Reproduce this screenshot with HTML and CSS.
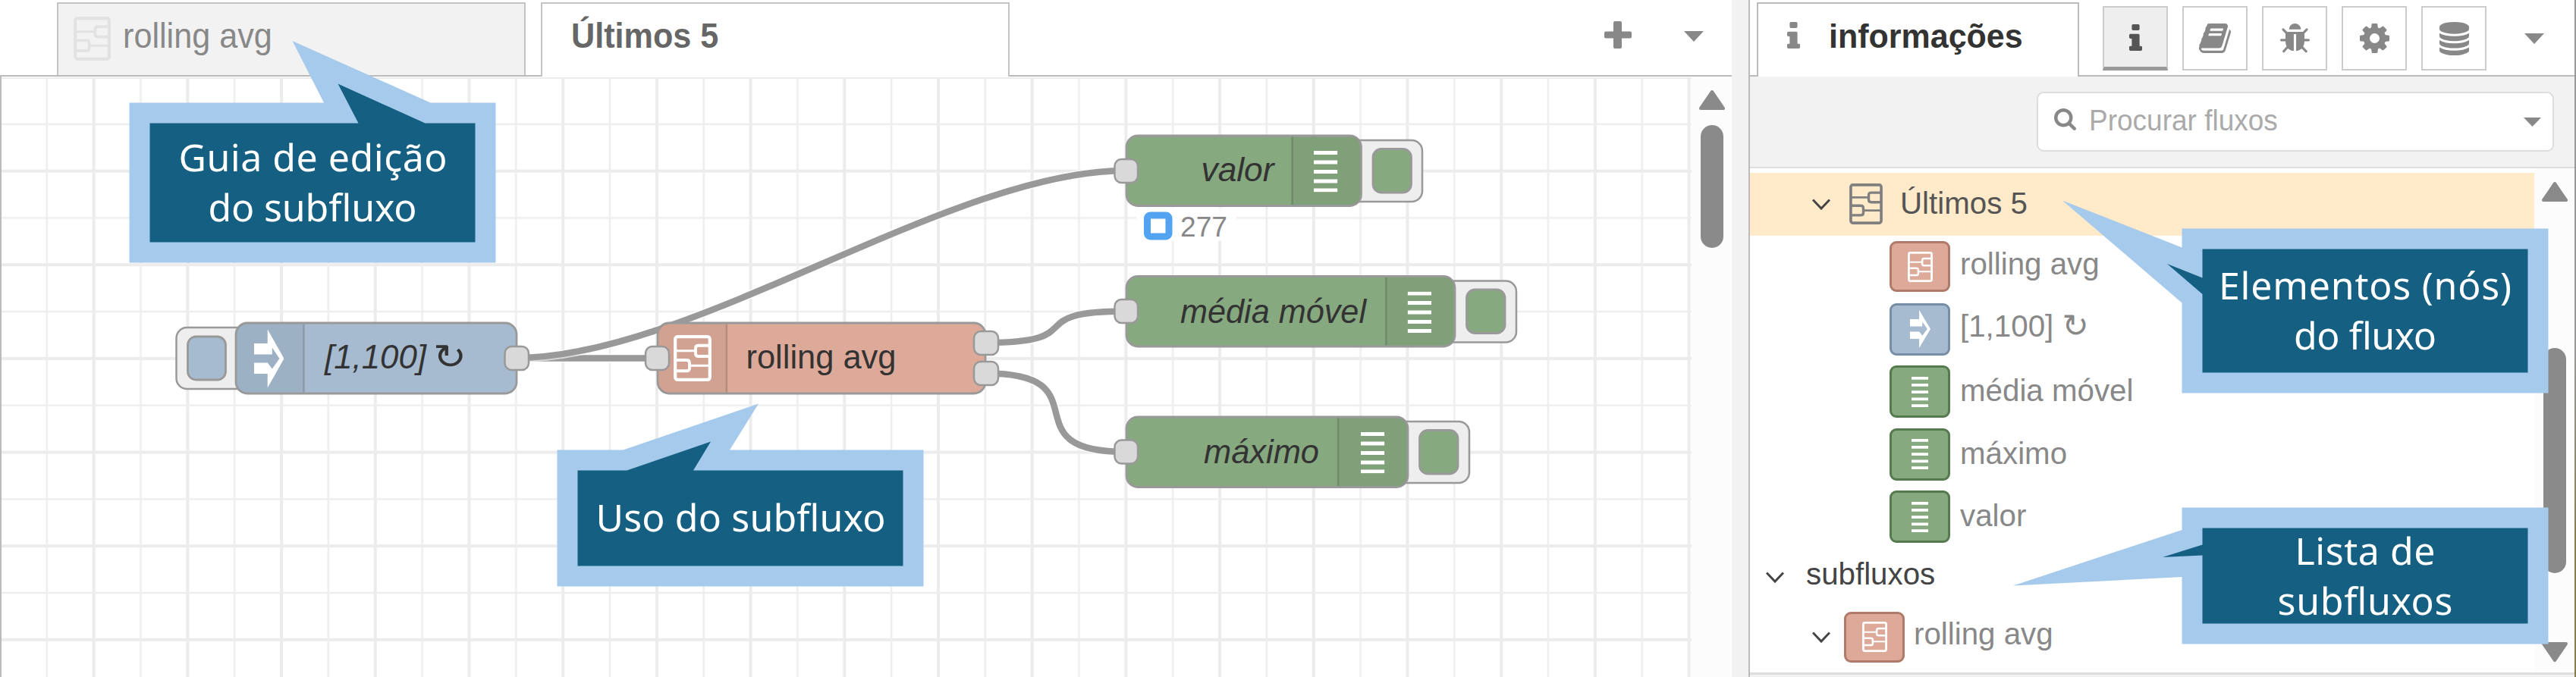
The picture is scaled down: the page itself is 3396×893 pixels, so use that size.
FILE: index.html
```html
<!DOCTYPE html>
<html lang="pt">
<head>
<meta charset="utf-8">
<title>Fluxos</title>
<link rel="stylesheet" href="styles.css">
</head>
<body>
<svg class="defs" width="0" height="0">
  <defs>
    <symbol id="subflow" viewBox="0 0 50 60" preserveAspectRatio="none">
      <g fill="none" stroke="currentColor">
        <rect x="2.2" y="2.2" width="45.6" height="55.6" rx="3" stroke-width="4.2"/>
        <path d="M3 20.5H29M21 39.500H47" stroke-width="3"/>
        <path d="M47 13.500H33Q29 13.500 29 17V24Q29 27.500 33 27.500H47M3 32.500H17Q21 32.500 21 36V43Q21 46.500 17 46.500H3" stroke-width="3.800"/>
      </g>
    </symbol>
    <symbol id="inject" viewBox="0 0 39 77" preserveAspectRatio="none">
      <path fill="currentColor" fill-rule="evenodd" d="M0 18.500H17.500V0L39 38.500L17.500 77V58.500H0V44H17.500L23.500 52L33 38.500L23.500 24V33H0Z"/>
    </symbol>
    <symbol id="debug" viewBox="0 0 32 54" preserveAspectRatio="none">
      <path stroke="currentColor" stroke-width="5" d="M0 2.500H32M0 14.800H32M0 27.200H32M0 39.600H32M0 51.500H32"/>
    </symbol>
    <symbol id="chev" viewBox="0 0 24 15" preserveAspectRatio="none">
      <path fill="none" stroke="currentColor" stroke-width="3" d="M1 1.500L12 13L23 1.500"/>
    </symbol>
    <symbol id="caret" viewBox="0 0 26 14" preserveAspectRatio="none"><path fill="currentColor" d="M0 0H26L13 14Z"/></symbol>
    <symbol id="scroll-arrow" viewBox="0 0 34 27" preserveAspectRatio="none">
      <path fill="currentColor" stroke="currentColor" stroke-width="4" stroke-linejoin="round" d="M17 3L32 25H2Z"/>
    </symbol>
    <symbol id="info" viewBox="576 128 640 1408" preserveAspectRatio="none"><path fill="currentColor" d="M1216 1344v128q0 26-19 45t-45 19h-512q-26 0-45-19t-19-45v-128q0-26 19-45t45-19h64v-384h-64q-26 0-45-19t-19-45v-128q0-26 19-45t45-19h384q26 0 45 19t19 45v576h64q26 0 45 19t19 45zm-128-1152v192q0 26-19 45t-45 19h-256q-26 0-45-19t-19-45v-192q0-26 19-45t45-19h256q26 0 45 19t19 45z"/></symbol>
    <symbol id="book" viewBox="64 128 1664 1536" preserveAspectRatio="none"><path fill="currentColor" d="M1703 478q40 57 18 129l-275 906q-19 64-76.500 107.500t-122.500 43.500h-923q-77 0-148.500-53.500t-99.500-131.500q-24-67-2-127 0-4 3-27t4-37q1-8-3-21.500t-3-19.500q2-11 8-21t16.500-23.500 16.500-23.500q23-38 45-91.500t30-91.500q3-10 .5-30t-.5-28q3-11 17-28t17-23q21-36 42-92t25-90q1-9-2.500-32t.5-28q4-13 22-30.500t22-22.500q19-26 42.500-84.500t27.500-96.500q1-8-3-25.500t-2-26.500q2-8 9-18t18-23 17-21q8-12 16.500-30.500t15-35 16-36 19.500-32 26.500-23.500 36-11.500 47.500 5.500l-1 3q38-9 51-9h761q74 0 114 56t18 130l-274 906q-36 119-71.500 153.500t-128.500 34.500h-869q-27 0-38 15-11 16-1 43 24 70 144 70h923q29 0 56-15.500t35-41.500l300-987q7-22 5-57 38 15 59 43zm-1064 2q-4 13 2 22.500t20 9.500h608q13 0 25.500-9.500t16.500-22.500l21-64q4-13-2-22.500t-20-9.500h-608q-13 0-25.500 9.500t-16.500 22.500zm-83 256q-4 13 2 22.500t20 9.500h608q13 0 25.500-9.500t16.500-22.500l21-64q4-13-2-22.500t-20-9.500h-608q-13 0-25.500 9.500t-16.500 22.500z"/></symbol>
    <symbol id="bug" viewBox="96 64 1600 1594" preserveAspectRatio="none"><path fill="currentColor" d="M1696 960q0 26-19 45t-45 19h-224q0 171-67 290l208 209q19 19 19 45t-19 45q-18 19-45 19t-45-19l-198-197q-5 5-15 13t-42 28.500-65 36.500-82 29-97 13v-896h-128v896q-51 0-101.500-13.500t-87-33-66-39-43.500-32.500l-15-14-183 207q-20 21-48 21-24 0-43-16-19-18-20.500-44.500t15.500-46.500l202-227q-58-114-58-274h-224q-26 0-45-19t-19-45 19-45 45-19h224v-294l-173-173q-19-19-19-45t19-45 45-19 45 19l173 173h844l173-173q19-19 45-19t45 19 19 45-19 45l-173 173v294h224q26 0 45 19t19 45zm-480-576h-640q0-133 93.500-226.500t226.500-93.500 226.500 93.500 93.500 226.500z"/></symbol>
    <symbol id="cog" viewBox="128 128 1536 1536" preserveAspectRatio="none"><path fill="currentColor" d="M1152 896q0-106-75-181t-181-75-181 75-75 181 75 181 181 75 181-75 75-181zm512-109v222q0 12-8 23t-20 13l-185 28q-19 54-39 91 35 50 107 138 10 12 10 25t-9 23q-27 37-99 108t-94 71q-12 0-26-9l-138-108q-44 23-91 38-16 136-29 186-7 28-36 28h-222q-14 0-24.500-8.500t-11.500-21.500l-28-184q-49-16-90-37l-141 107q-10 9-25 9-14 0-25-11-126-114-165-168-7-10-7-23 0-12 8-23 15-21 51-66.500t54-70.500q-27-50-41-99l-183-27q-13-2-21-12.500t-8-23.500v-222q0-12 8-23t19-13l186-28q14-46 39-92-40-57-107-138-10-12-10-24 0-10 9-23 26-36 98.500-107.500t94.500-71.500q13 0 26 10l138 107q44-23 91-38 16-136 29-186 7-28 36-28h222q14 0 24.500 8.500t11.500 21.500l28 184q49 16 90 37l142-107q9-9 24-9 13 0 25 10 129 119 165 170 7 8 7 22 0 12-8 23-15 21-51 66.500t-54 70.500q26 50 41 98l183 28q13 2 21 12.500t8 23.500z"/></symbol>
    <symbol id="database" viewBox="128 0 1536 1792" preserveAspectRatio="none"><path fill="currentColor" d="M896 768q237 0 443-43t325-127v170q0 69-103 128t-280 93.500-385 34.500-385-34.500-280-93.500-103-128v-170q119 84 325 127t443 43zm0 768q237 0 443-43t325-127v170q0 69-103 128t-280 93.500-385 34.500-385-34.500-280-93.500-103-128v-170q119 84 325 127t443 43zm0-384q237 0 443-43t325-127v170q0 69-103 128t-280 93.500-385 34.500-385-34.500-280-93.500-103-128v-170q119 84 325 127t443 43zm0-1152q208 0 385 34.500t280 93.500 103 128v128q0 69-103 128t-280 93.500-385 34.500-385-34.500-280-93.500-103-128v-128q0-69 103-128t280-93.500 385-34.500z"/></symbol>
    <symbol id="search" viewBox="64 128 1664 1664" preserveAspectRatio="none"><path fill="currentColor" d="M1216 832q0-185-131.500-316.500t-316.500-131.500-316.500 131.500-131.500 316.500 131.500 316.500 316.500 131.500 316.500-131.500 131.500-316.500zm512 832q0 52-38 90t-90 38q-54 0-90-38l-343-342q-179 124-399 124-143 0-273.500-55.500t-225-150-150-225-55.500-273.500 55.500-273.500 150-225 225-150 273.500-55.500 273.500 55.500 225 150 150 225 55.500 273.500q0 220-124 399l343 343q37 37 37 90z"/></symbol>
    <pattern id="grid" width="123.700" height="123.640" patternUnits="userSpaceOnUse" x="-2" y="-2">
      <path d="M2 0V123.700M0 2H123.700" stroke="#ececec" stroke-width="4"/>
      <path d="M63.800 0V123.700M0 63.800H123.700" stroke="#eee" stroke-width="2.600"/>
    </pattern>
  </defs>
</svg>

<div class="app">
  <main class="editor">
    <header class="tabs">
      <div class="tab tab-subflow"><svg class="tab-icon"><use href="#subflow"/></svg><span>rolling avg</span></div>
      <div class="tab tab-active"><span>Últimos 5</span></div>
      <div class="tab-tools">
        <svg class="plus" viewBox="0 0 36 36" preserveAspectRatio="none"><path fill="currentColor" d="M12 2q0-2 2-2h7q2 0 2 2v11.500h11q2 0 2 2v5q0 2-2 2H23V34q0 2-2 2h-7q-2 0-2-2V22.500H2q-2 0-2-2v-5q0-2 2-2h10z"/></svg>
        <svg class="caret"><use href="#caret"/></svg>
      </div>
    </header>
    <div class="workspace">
      <svg class="canvas" viewBox="0 101 2230 792">
        <g transform="translate(0 102)"><rect width="2230" height="800" fill="url(#grid)"/></g>
        <path d="M1 101V893" stroke="#bbb" stroke-width="2"/>
        <g class="buttons">
          <rect x="232.500" y="432" width="100" height="81" rx="14"/>
          <rect x="1740" y="185" width="135" height="81" rx="14"/>
          <rect x="1860" y="370.500" width="139" height="81" rx="14"/>
          <rect x="1800" y="556" width="137" height="81" rx="14"/>
        </g>
        <g class="wires">
          <path class="halo" d="M681 472.500H866"/><path d="M681 472.500H866"/>
          <path class="halo" d="M681 472C913 472 1252 225 1484 225"/><path d="M681 472C913 472 1252 225 1484 225"/>
          <path class="halo" d="M1300 452C1442 452 1342 410.500 1484 410.500"/><path d="M1300 452C1442 452 1342 410.500 1484 410.500"/>
          <path class="halo" d="M1300 492.500C1458 492.500 1326 596 1484 596"/><path d="M1300 492.500C1458 492.500 1326 596 1484 596"/>
        </g>
        <g class="node">
          <rect x="247.500" y="444" width="50" height="57" rx="11" fill="#a6bbcf" stroke-width="3"/>
          <rect x="311" y="426" width="370" height="93" rx="15" fill="#a6bbcf"/>
          <path class="shade" d="M400.500 427.500V517.500H325Q312.500 517.500 312.500 505V440Q312.500 427.500 325 427.500Z"/>
          <path class="divider" d="M400.500 427.500V517.500"/>
          <svg x="335" y="434.500" width="39.500" height="77" class="white"><use href="#inject"/></svg>
          <text class="it" x="428" y="486" textLength="134" lengthAdjust="spacingAndGlyphs">[1,100]</text>
          <text class="it loop" x="571" y="486" textLength="44" lengthAdjust="spacingAndGlyphs">↻</text>
          <rect class="port" x="665.500" y="457" width="31.500" height="31"/>
        </g>
        <g class="node">
          <rect x="867" y="426" width="432" height="93" rx="15" fill="#ddaa99"/>
          <path class="shade" d="M958 427.500V517.500H881Q868.500 517.500 868.500 505V440Q868.500 427.500 881 427.500Z"/>
          <path class="divider" d="M958 427.500V517.500"/>
          <svg x="888" y="442" width="50" height="61" class="white"><use href="#subflow"/></svg>
          <text x="983.500" y="486" textLength="198" lengthAdjust="spacingAndGlyphs">rolling avg</text>
          <rect class="port" x="851" y="457" width="31" height="31"/>
          <rect class="port" x="1284" y="437" width="32" height="31"/>
          <rect class="port" x="1284" y="477" width="32" height="31"/>
        </g>
        <g class="node">
          <rect x="1485" y="179" width="309.500" height="92.500" rx="15" fill="#87a980"/>
          <path class="shade" d="M1703.500 180.500H1780Q1793 180.500 1793 194V257Q1793 270 1780 270H1703.500Z"/>
          <path class="divider" d="M1703.500 180.500V270"/>
          <rect x="1810" y="196.500" width="50.500" height="57.500" rx="11" fill="#87a980" stroke-width="3"/>
          <svg x="1732" y="199" width="31.500" height="54.500" class="white"><use href="#debug"/></svg>
          <text class="it" x="1583.500" y="239" textLength="96" lengthAdjust="spacingAndGlyphs">valor</text>
          <rect class="port" x="1469.500" y="210" width="30.500" height="31"/>
        </g>
        <g class="node">
          <rect x="1485" y="364.500" width="433" height="92.500" rx="15" fill="#87a980"/>
          <path class="shade" d="M1827.300 366H1904Q1916.500 366 1916.500 379V442.500Q1916.500 455.500 1904 455.500H1827.300Z"/>
          <path class="divider" d="M1827.300 366V455.500"/>
          <rect x="1933.500" y="382" width="50.500" height="57.500" rx="11" fill="#87a980" stroke-width="3"/>
          <svg x="1855.500" y="384.500" width="31.500" height="54.500" class="white"><use href="#debug"/></svg>
          <text class="it" x="1556" y="425.500" textLength="245" lengthAdjust="spacingAndGlyphs">média móvel</text>
          <rect class="port" x="1469.500" y="395" width="30.500" height="31"/>
        </g>
        <g class="node">
          <rect x="1485" y="550" width="371" height="92.500" rx="15" fill="#87a980"/>
          <path class="shade" d="M1764 551.500H1842Q1854.500 551.500 1854.500 564.500V628Q1854.500 641 1842 641H1764Z"/>
          <path class="divider" d="M1764 551.500V641"/>
          <rect x="1871.500" y="567.500" width="50.500" height="57.500" rx="11" fill="#87a980" stroke-width="3"/>
          <svg x="1794" y="570" width="31.500" height="54.500" class="white"><use href="#debug"/></svg>
          <text class="it" x="1587" y="610.500" textLength="152" lengthAdjust="spacingAndGlyphs">máximo</text>
          <rect class="port" x="1469.500" y="580.500" width="30.500" height="31"/>
        </g>
        <g class="status">
          <rect x="1498" y="274" width="132" height="44" fill="#fff" opacity=".85"/>
          <rect x="1512.500" y="284" width="28.500" height="28" rx="4" fill="#fff" stroke="#53a3f3" stroke-width="9"/>
          <text x="1556" y="312" textLength="62" lengthAdjust="spacingAndGlyphs">277</text>
        </g>
      </svg>
      <div class="scrollbar"><svg class="arrow"><use href="#scroll-arrow"/></svg><div class="thumb"></div></div>
    </div>
  </main>
  <div class="separator"></div>
  <aside class="sidebar">
    <header class="side-head">
      <div class="side-tab"><svg class="i-info"><use href="#info"/></svg><span>informações</span></div>
      <div class="side-buttons">
        <div class="sbtn on"><svg class="i-info2"><use href="#info"/></svg></div>
        <div class="sbtn"><svg class="i-book"><use href="#book"/></svg></div>
        <div class="sbtn"><svg class="i-bug"><use href="#bug"/></svg></div>
        <div class="sbtn"><svg class="i-cog"><use href="#cog"/></svg></div>
        <div class="sbtn"><svg class="i-db"><use href="#database"/></svg></div>
        <svg class="caret"><use href="#caret"/></svg>
      </div>
    </header>
    <div class="search-bar">
      <div class="search"><svg class="i-search"><use href="#search"/></svg><span>Procurar fluxos</span><svg class="caret small"><use href="#caret"/></svg></div>
    </div>
    <div class="outline">
      <div class="tree">
        <div class="row selected"><svg class="chev"><use href="#chev"/></svg><svg class="flow-icon"><use href="#subflow"/></svg><span class="dark">Últimos 5</span></div>
        <div class="row leaf up"><i class="chip red"><svg><use href="#subflow"/></svg></i><span>rolling avg</span></div>
        <div class="row leaf up"><i class="chip blue"><svg class="inj"><use href="#inject"/></svg></i><span>[1,100] <b class="loop">↻</b></span></div>
        <div class="row leaf"><i class="chip green"><svg class="dbg"><use href="#debug"/></svg></i><span>média móvel</span></div>
        <div class="row leaf"><i class="chip green"><svg class="dbg"><use href="#debug"/></svg></i><span>máximo</span></div>
        <div class="row leaf"><i class="chip green"><svg class="dbg"><use href="#debug"/></svg></i><span>valor</span></div>
        <div class="row group"><svg class="chev"><use href="#chev"/></svg><span>subfluxos</span></div>
        <div class="row sub up"><svg class="chev"><use href="#chev"/></svg><i class="chip red"><svg><use href="#subflow"/></svg></i><span>rolling avg</span></div>
      </div>
      <div class="scrollbar side"><svg class="arrow"><use href="#scroll-arrow"/></svg><div class="thumb"></div><svg class="arrow down"><use href="#scroll-arrow"/></svg></div>
    </div>
    <footer class="side-foot"></footer>
  </aside>
  <div class="edge"></div>
</div>

<svg class="callouts" viewBox="0 0 3396 893">
  <path class="outer" d="M170.500 135.500H427L385.500 54L567.500 135.500H653.500V346.500H170.500Z"/>
  <path class="inner" d="M197.500 162.500H472.500L445.500 110.500L560.500 162.500H626.500V319.500H197.500Z"/>
  <text x="412.500" y="226" textLength="354">Guia de edição</text>
  <text x="412" y="292" textLength="275">do subfluxo</text>

  <path class="outer" d="M734.500 593.500H821.500L1000 532.500L962 593.500H1217.500V773.500H734.500Z"/>
  <path class="inner" d="M761.500 620.500H826.500L937 582.500L914 620.500H1190.500V746.500H761.500Z"/>
  <text x="976.500" y="701" textLength="382">Uso do subfluxo</text>

  <path class="outer" d="M2876.500 301.500H3359.500V518.500H2876.500V399.500L2719 264.500L2876.500 326.500Z"/>
  <path class="inner" d="M2903.500 328.500H3332.500V491.500H2903.500V388L2857 348L2903.500 366.500Z"/>
  <text x="3118" y="395" textLength="386">Elementos (nós)</text>
  <text x="3118" y="460.500" textLength="188">do fluxo</text>

  <path class="outer" d="M2876.500 669.500H3359.500V849.500H2876.500V761L2654 772.500L2876.500 699Z"/>
  <path class="inner" d="M2903.500 696.500H3332.500V822.500H2903.500V732.500L2851 735L2903.500 718.500Z"/>
  <text x="3118" y="744.500" textLength="185">Lista de</text>
  <text x="3118" y="810.500" textLength="231">subfluxos</text>
</svg>
</body>
</html>
```

FILE: styles.css
```css
* { box-sizing: border-box; }
body {
  margin: 0;
  width: 3396px;
  height: 893px;
  overflow: hidden;
  background: #fff;
  font-family: "Liberation Sans", Arial, sans-serif;
  position: relative;
}
svg { display: block; flex: none; }
.defs { position: absolute; }
.app { display: flex; width: 3396px; height: 893px; }

/* editor */
.editor { width: 2283px; display: flex; flex-direction: column; }
.tabs {
  height: 101px;
  display: flex;
  align-items: flex-end;
  padding-left: 75px;
  border-bottom: 2px solid #bbb;
}
.tab {
  width: 618px;
  height: 96px;
  border: 2px solid #c4c4c4;
  border-bottom: 0;
  display: flex;
  align-items: center;
  padding-bottom: 10px;
  font-size: 43.2px;
}
.tab span, .side-tab span { transform: scaleY(1.05); white-space: nowrap; }
.tab-subflow { background: #f2f2f2; color: #888; padding-left: 20px; gap: 16px; }
.tab-icon { width: 49px; height: 58px; color: #e2e2e2; margin-top: 7px; }
.tab-active {
  height: 98px;
  margin: 0 0 -2px 20px;
  padding-left: 38px;
  padding-bottom: 12px;
  background: #fff;
  color: #666;
  font-weight: bold;
}
.tab-tools {
  flex: 1;
  align-self: stretch;
  display: flex;
  align-items: center;
  justify-content: flex-end;
  gap: 69px;
  padding: 0 37px 7px 0;
  color: #888;
}
.plus { width: 36px; height: 36px; }
.caret { width: 26px; height: 14px; color: #888; }
.tab-tools .caret { margin-top: 4px; }
.workspace { display: flex; height: 792px; }
.canvas { width: 2230px; height: 792px; }
.scrollbar {
  width: 53px;
  background: #fcfcfc;
  display: flex;
  flex-direction: column;
  align-items: center;
  padding-top: 17px;
  color: #8a8a8a;
}
.arrow { width: 34px; height: 27px; }
.thumb { width: 30px; height: 162px; margin-top: 20px; border-radius: 15px; background: #8a8a8a; }

.buttons rect { fill: #eee; stroke: #999; stroke-width: 2.5; }
.wires path { fill: none; stroke: #999; stroke-width: 8.5; }
.wires .halo { stroke: #fff; stroke-width: 12; stroke-opacity: .6; }
.node rect { stroke: #999; stroke-width: 2.8; }
.node .port { fill: #d9d9d9; stroke: #999; stroke-width: 2.5; rx: 9px; }
.node text { font-size: 45px; fill: #333; }
.node .it { font-style: italic; }
.node .loop { font-family: "DejaVu Sans", sans-serif; font-size: 45px; }
.shade { fill: #000; fill-opacity: .05; }
.divider { stroke: #000; stroke-opacity: .15; stroke-width: 2.5; }
.white { color: #fff; }
.status text { font-size: 37px; fill: #888; }

.separator { width: 22px; background: #f2f2f2; }

/* sidebar */
.sidebar {
  width: 1089px;
  border-left: 2px solid #bbb;
  display: flex;
  flex-direction: column;
}
.side-head { height: 101px; display: flex; align-items: flex-end; border-bottom: 2px solid #bbb; }
.side-tab {
  width: 425px;
  height: 98px;
  margin: 0 0 -2px 9px;
  border: 2px solid #bbb;
  border-bottom: 0;
  background: #fff;
  display: flex;
  align-items: center;
  gap: 38px;
  padding: 0 0 12px 38px;
  font-size: 43px;
  font-weight: bold;
  color: #333;
}
.i-info { width: 17px; height: 35px; color: #888; margin-top: -2px; }
.side-buttons { display: flex; align-items: center; height: 85px; margin: 0 0 6px 31px; gap: 19px; color: #888; }
.sbtn {
  width: 86px;
  height: 85px;
  border: 2px solid #ccc;
  display: flex;
  align-items: center;
  justify-content: center;
}
.sbtn.on { background: #eee; border-bottom: 5px solid #999; color: #555; }
.sbtn svg { height: 39px; }
.sbtn .i-info2 { width: 17px; height: 35px; }
.i-book { width: 42px; }
.i-bug, .i-cog { width: 39px; }
.sbtn .i-db { width: 39px; height: 44px; }
.side-buttons .caret { margin-left: 31px; }
.search-bar {
  height: 121px;
  background: #f2f2f2;
  border-bottom: 2px solid #ddd;
  display: flex;
  justify-content: flex-end;
  align-items: center;
  padding-right: 27px;
}
.search {
  width: 682px;
  height: 79px;
  background: #fff;
  border: 2px solid #ddd;
  border-radius: 9px;
  display: flex;
  align-items: center;
  padding: 0 15px 0 21px;
  font-size: 37px;
  color: #aaa;
}
.search span { margin: -2px 0 0 17px; flex: 1; transform: scaleY(1.04); }
.i-search { width: 29px; height: 29px; color: #888; margin-top: -6px; }
.caret.small { width: 23px; height: 12px; }
.outline { height: 665px; display: flex; }
.tree { width: 1034px; padding-top: 6px; }
.row {
  height: 82.5px;
  display: flex;
  align-items: center;
  font-size: 40.3px;
  color: #888;
  white-space: nowrap;
}
.row span { margin-top: -1px; }
.row.up span { margin-top: -6px; }
.selected { background: #ffeaca; padding-left: 82px; }
.chev { width: 24px; height: 15px; color: #444; }
.flow-icon { width: 44px; height: 54px; margin: 0 23px 0 25px; color: #808080; }
.dark { color: #555; }
.leaf { padding-left: 184px; }
.chip {
  width: 80px;
  height: 69px;
  border: 3px solid;
  border-radius: 9px;
  margin-right: 13px;
  display: flex;
  align-items: center;
  justify-content: center;
}
.chip svg { width: 33px; height: 40px; color: #fff; }
.chip .inj { width: 27px; height: 50px; }
.chip .dbg { width: 22px; height: 40px; }
.red { background: #ddaa99; border-color: #b07a6a; height: 67px; }
.blue { background: #a6bbcf; border-color: #768fa6; }
.green { background: #87a980; border-color: #557a4e; }
.loop { font-family: "DejaVu Sans", sans-serif; font-weight: normal; font-size: 42px; line-height: 1; }
.group { height: 76px; padding-left: 21px; color: #444; }
.group span { margin: -6px 0 0 29px; }
.sub { padding-left: 82px; }
.sub .chip { margin-left: 18px; margin-right: 12px; }
.scrollbar.side { width: 53px; }
.scrollbar.side .thumb { height: 297px; margin-top: 193px; }
.arrow.down { transform: rotate(180deg); margin-top: 91px; }
.side-foot { flex: 1; background: #f2f2f2; border-top: 3px solid #ddd; }
.edge { width: 2px; background: linear-gradient(#999 50%, #8a7a4a 80%); }

/* annotations over the screen */
.callouts { position: absolute; inset: 0; width: 3396px; height: 893px; }
.outer { fill: #a6caec; }
.inner { fill: #156082; }
.callouts text {
  fill: #fff;
  font-family: "Noto Sans", "Open Sans", sans-serif;
  font-size: 50px;
  text-anchor: middle;
}
```
